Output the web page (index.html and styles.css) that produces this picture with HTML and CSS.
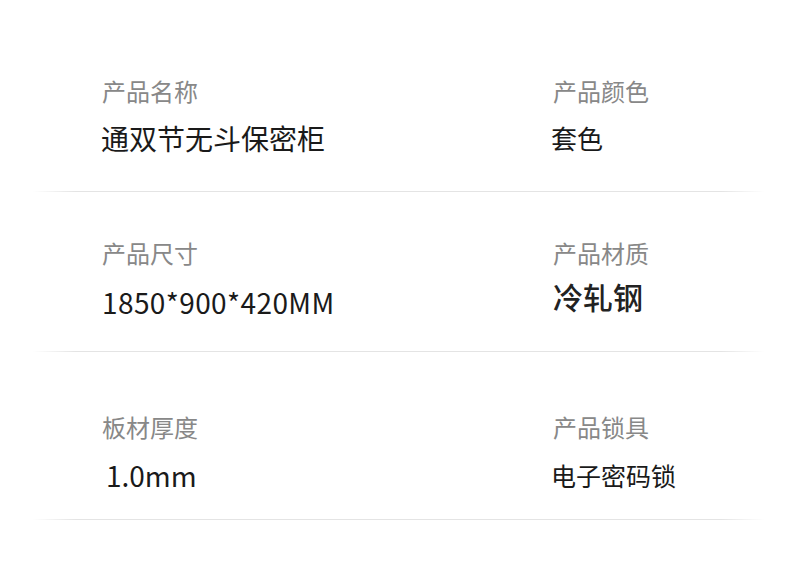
FILE: index.html
```html
<!DOCTYPE html>
<html lang="zh-CN">
<head>
<meta charset="utf-8">
<link rel="stylesheet" href="styles.css">
</head>
<body>
<div class="sheet">
  <div class="row row-1">
    <div class="cell cell-left">
      <div class="label">产品名称</div>
      <div class="value v-name">通双节无斗保密柜</div>
    </div>
    <div class="cell cell-right">
      <div class="label">产品颜色</div>
      <div class="value v-color">套色</div>
    </div>
  </div>
  <div class="row row-2">
    <div class="cell cell-left">
      <div class="label">产品尺寸</div>
      <div class="value v-size">1850*900*420MM</div>
    </div>
    <div class="cell cell-right">
      <div class="label">产品材质</div>
      <div class="value v-material">冷轧钢</div>
    </div>
  </div>
  <div class="row row-3">
    <div class="cell cell-left">
      <div class="label">板材厚度</div>
      <div class="value v-thick">1.0mm</div>
    </div>
    <div class="cell cell-right">
      <div class="label">产品锁具</div>
      <div class="value v-lock">电子密码锁</div>
    </div>
  </div>
</div>
</body>
</html>
```
FILE: styles.css
```css
html, body {
  margin: 0;
  padding: 0;
  background: #ffffff;
}
body {
  font-family: "Noto Sans CJK SC", "Noto Sans", sans-serif;
  width: 790px;
  height: 579px;
  overflow: hidden;
}
.sheet {
  display: flex;
  flex-direction: column;
}
.row {
  position: relative;
  display: flex;
  margin: 0 25px 0 32px;
}
.row::after {
  content: "";
  position: absolute;
  left: 0;
  right: 0;
  bottom: 0;
  height: 1px;
  background: linear-gradient(to right, rgba(228,228,228,0) 0%, #e4e4e4 6%, #e4e4e4 94%, rgba(228,228,228,0) 100%);
}
.cell {
  display: flex;
  flex-direction: column;
}
.cell-left {
  width: 521px;
  padding-left: 70px;
  box-sizing: border-box;
}
.cell-right {
  flex: 1;
}
.label {
  font-size: 24px;
  line-height: 30px;
  color: #888888;
}
.value {
  font-size: 26px;
  line-height: 36px;
  color: #1a1a1a;
}
.row-1 { padding: 76px 0 36px; }
.row-1 .value { margin-top: 14px; }
.row-2 { padding: 46px 0 32px; }
.row-2 .value { margin-top: 16px; }
.row-3 { padding: 60px 0 27px; }
.row-3 .value { margin-top: 15px; }
.v-name { font-size: 28px; margin-left: -1px; }
.v-color { font-size: 26px; margin-left: -2px; }
.v-size { font-size: 28px; letter-spacing: 0.4px; }
.v-material { font-size: 30px; font-weight: 500; color: #222222; margin-top: 10px !important; }
.v-thick { font-size: 28px; padding-left: 4px; }
.v-lock { font-size: 25px; margin-left: -2px; }
```
